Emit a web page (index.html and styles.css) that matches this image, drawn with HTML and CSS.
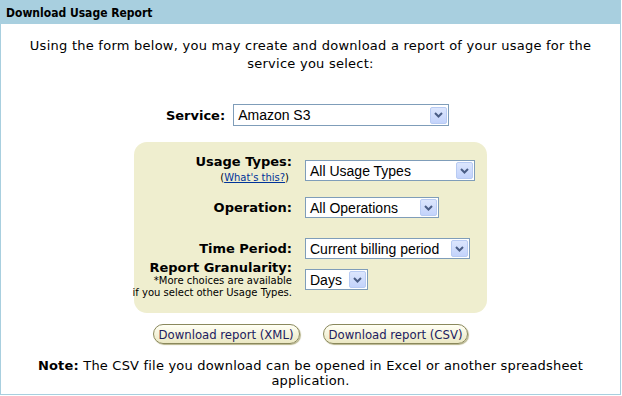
FILE: index.html
```html
<!DOCTYPE html>
<html lang="en">
<head>
  <meta charset="UTF-8">
  <title>Download Usage Report</title>
  <link rel="stylesheet" href="styles.css">
</head>
<body>

  <div class="report-box">
    <div class="report-header">Download Usage Report</div>

    <p class="intro">Using the form below, you may create and download a report of your usage for the service you select:</p>

    <div class="service-row">
      <span class="label">Service:</span>
      <div class="select service-select">
        <span class="select-text">Amazon S3</span>
        <span class="select-arrow"><svg width="9" height="6" viewBox="0 0 9 6"><path d="M1 1 L4.5 4.5 L8 1" fill="none" stroke="#4a5d85" stroke-width="2"/></svg></span>
      </div>
    </div>

    <div class="options-panel">
      <div class="field field-usage">
        <div class="field-label">
          <span class="label">Usage Types:</span>
          <span class="hint">(<a href="#">What's this?</a>)</span>
        </div>
        <div class="select usage-select">
          <span class="select-text">All Usage Types</span>
          <span class="select-arrow"><svg width="9" height="6" viewBox="0 0 9 6"><path d="M1 1 L4.5 4.5 L8 1" fill="none" stroke="#4a5d85" stroke-width="2"/></svg></span>
        </div>
      </div>

      <div class="field field-operation">
        <div class="field-label"><span class="label">Operation:</span></div>
        <div class="select operation-select">
          <span class="select-text">All Operations</span>
          <span class="select-arrow"><svg width="9" height="6" viewBox="0 0 9 6"><path d="M1 1 L4.5 4.5 L8 1" fill="none" stroke="#4a5d85" stroke-width="2"/></svg></span>
        </div>
      </div>

      <div class="field field-period">
        <div class="field-label"><span class="label">Time Period:</span></div>
        <div class="select period-select">
          <span class="select-text">Current billing period</span>
          <span class="select-arrow"><svg width="9" height="6" viewBox="0 0 9 6"><path d="M1 1 L4.5 4.5 L8 1" fill="none" stroke="#4a5d85" stroke-width="2"/></svg></span>
        </div>
      </div>

      <div class="field field-granularity">
        <div class="field-label">
          <span class="label">Report Granularity:</span>
          <span class="note-small">*More choices are available</span>
          <span class="note-small">if you select other Usage Types.</span>
        </div>
        <div class="select days-select">
          <span class="select-text">Days</span>
          <span class="select-arrow"><svg width="9" height="6" viewBox="0 0 9 6"><path d="M1 1 L4.5 4.5 L8 1" fill="none" stroke="#4a5d85" stroke-width="2"/></svg></span>
        </div>
      </div>
    </div>

    <div class="buttons">
      <button class="download-button">Download report (XML)</button>
      <button class="download-button">Download report (CSV)</button>
    </div>

    <p class="note"><b>Note:</b> The CSV file you download can be opened in Excel or another spreadsheet application.</p>
  </div>

</body>
</html>
```

FILE: styles.css
```css
body{
  margin: 0;
  font-family: "DejaVu Sans", Verdana, sans-serif;
  font-size: 13px;
  color: #000;
  background-color: #fff;
}

.report-box{
  width: 619px;
  height: 394px;
  border: 1px solid #a8cfdf;
  border-top: none;
}

.report-header{
  background-color: #a8cfdf;
  height: 24px;
  line-height: 26px;
  padding-left: 5px;
  font-family: "DejaVu Sans Condensed", "DejaVu Sans", sans-serif;
  font-weight: bold;
  font-size: 12px;
}

p.intro{
  margin: 13px 24px 0 24px;
  text-align: center;
  line-height: 18px;
  letter-spacing: 0.25px;
}

.label{
  font-weight: bold;
  font-size: 13px;
  letter-spacing: 0;
}

.service-row{
  display: flex;
  justify-content: center;
  align-items: center;
  gap: 8px;
  margin-top: 31px;
  padding-right: 6px;
}

/* fake xp style dropdowns */
.select{
  display: flex;
  align-items: center;
  justify-content: space-between;
  box-sizing: border-box;
  height: 21px;
  border: 1px solid #7f9db9;
  background-color: #fff;
  padding: 0 1px 0 4px;
  font-family: "Liberation Sans", Arial, sans-serif;
  font-size: 14px;
}

.select-arrow{
  display: flex;
  align-items: center;
  justify-content: center;
  width: 15px;
  height: 15px;
  border: 1px solid #b8cbf3;
  border-radius: 2px;
  background: linear-gradient(#dce6fd, #c3d3fb);
}

.service-select{ width: 216px; height: 22px; }
.usage-select{ width: 170px; }
.operation-select{ width: 134px; }
.period-select{ width: 165px; }
.days-select{ width: 63px; }

.options-panel{
  width: 353px;
  margin: 16px auto 0 auto;
  padding: 12px 0 14px 0;
  background-color: #efeecf;
  border-radius: 13px;
}

.field{
  display: grid;
  grid-template-columns: 158px auto;
  column-gap: 13px;
  align-items: center;
}

.field-label{
  display: flex;
  flex-direction: column;
  align-items: flex-end;
}

.field-usage{ align-items: start; }
.field-usage .select{ margin-top: 6px; }
.field-operation{ margin-top: 14px; }
.field-period{ margin-top: 20px; }
.field-granularity{ margin-top: 1px; }

.hint{
  font-size: 10px;
  margin-top: 3px;
  margin-right: 3px;
}

.hint a{
  color: #003399;
}

.note-small{
  font-size: 10px;
  line-height: 12px;
  white-space: nowrap;
}

.buttons{
  display: flex;
  justify-content: center;
  gap: 23px;
  margin-top: 11px;
}

button.download-button{
  height: 20px;
  padding: 0 5px;
  border: 1px solid #8a885c;
  border-radius: 10px;
  background: linear-gradient(#fffff4, #ebe8c4);
  box-shadow: 1px 1px 1px #b7b48b;
  color: #1c2060;
  font-family: "DejaVu Sans Condensed", "DejaVu Sans", sans-serif;
  font-size: 13px;
  cursor: pointer;
}

p.note{
  margin: 14px 30px 0 30px;
  text-align: center;
  line-height: 15px;
  letter-spacing: 0.2px;
}
```
